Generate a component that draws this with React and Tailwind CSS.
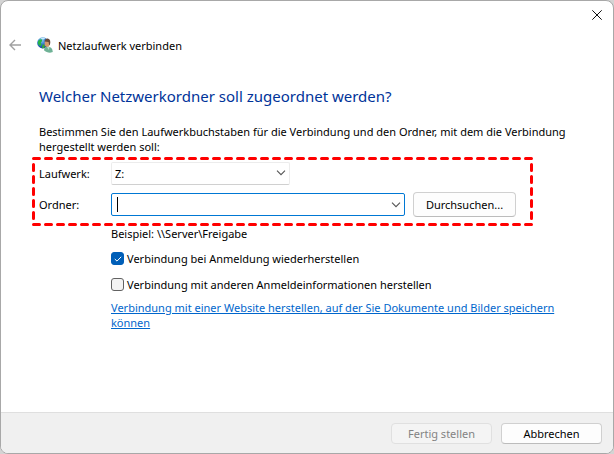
import React from "react";

const drives = ["Z:", "Y:", "X:", "W:", "V:"];

const Chevron = ({ className = "" }) => (
  <svg
    viewBox="0 0 10 6"
    className={`w-[10px] h-[6px] ${className}`}
    fill="none"
    stroke="#555555"
    strokeWidth="1.1"
    aria-hidden="true"
  >
    <path d="M1 0.7 5 4.7 9 0.7" />
  </svg>
);

// Globe with a small user in front of it
const NetworkDriveIcon = () => (
  <svg viewBox="0 0 16 16" className="w-4 h-4 shrink-0" aria-hidden="true">
    <defs>
      <radialGradient id="globe" cx="0.4" cy="0.25" r="0.8">
        <stop offset="0" stopColor="#8fd0f5" />
        <stop offset="0.5" stopColor="#2b74cf" />
        <stop offset="1" stopColor="#123a94" />
      </radialGradient>
    </defs>
    <circle cx="5.8" cy="5.9" r="5.6" fill="url(#globe)" />
    <path d="M1 4.6C2 2.6 3.2 2 4.8 2.4L5.2 4 3.8 5.4 4.6 7 3.4 9.4C1.4 8.2.4 6.6 1 4.6Z" fill="#25b548" />
    <path d="M5.6 7.2 8 8 7.2 11 5 11.2Z" fill="#39a935" />
    <path d="M3.4 1.4C5 .4 7 .4 8.4 1.2L6.4 2.4Z" fill="#c9ecf8" />
    <path d="M7 13.2C7 10.8 8.4 9.6 10.8 9.6 13.8 9.8 15.6 11.6 15.8 15L13 15.8C10.6 15.4 8.4 14.6 7 13.2Z" fill="#6fb296" />
    <path d="M9.6 9.6 12.6 10 11.8 13Z" fill="#b5dccb" />
    <ellipse cx="10.2" cy="6.4" rx="2.6" ry="3.4" fill="#d39a6c" />
    <path d="M7.6 4.6C7.6 2.2 9.2 1.2 10.8 1.4 13.2 1.8 13.8 4 13 7.4L12.2 8.2 11.6 5Z" fill="#66483a" />
  </svg>
);

const CheckOption = ({ id, label, checked, onChange }) => (
  <div className="flex items-center h-[15px]">
    <span className="relative flex items-center justify-center w-[13px] h-[13px] shrink-0">
      <input
        id={id}
        type="checkbox"
        checked={checked}
        onChange={(e) => onChange(e.target.checked)}
        className="appearance-none w-[13px] h-[13px] shrink-0 rounded-[3px] border border-[#626262] bg-[#f3f3f3] checked:border-[#005fb8] checked:bg-[#005fb8]"
      />
      {checked && (
        <svg
          viewBox="0 0 8 6"
          className="absolute w-2 h-1.5 pointer-events-none"
          fill="none"
          stroke="#ffffff"
          aria-hidden="true"
        >
          <path d="M0.8 3 3 5.1 7.2 0.8" />
        </svg>
      )}
    </span>
    <label htmlFor={id} className="pl-[3px] whitespace-nowrap">
      {label}
    </label>
  </div>
);

const App = () => {
  const [drive, setDrive] = React.useState("Z:");
  const [folder, setFolder] = React.useState("");
  const [reconnect, setReconnect] = React.useState(true);
  const [otherLogin, setOtherLogin] = React.useState(false);

  return (
    <div className="min-h-screen flex bg-[#d4d4d4]">
      <div className="flex-1 flex flex-col rounded-lg border border-[#a8a8a8] bg-white overflow-hidden font-['Noto_Sans','Open_Sans',sans-serif] text-[11px] leading-[15px] text-black">
        <div className="flex justify-end h-7">
          <button type="button" aria-label="Schließen" className="w-8 flex items-center justify-center">
            <svg viewBox="0 0 10 10" className="w-[10px] h-[10px]" stroke="#111111" aria-hidden="true">
              <path d="M0.3 0.3 9.7 9.7M9.7 0.3 0.3 9.7" />
            </svg>
          </button>
        </div>

        <header className="flex items-center h-8 pl-2">
          <button type="button" aria-label="Zurück" className="w-7 h-full flex items-center">
            <svg
              viewBox="0 0 12 12"
              className="w-3 h-3"
              fill="none"
              stroke="#a0a0a0"
              strokeWidth="1.4"
              aria-hidden="true"
            >
              <path d="M12 6H1M6 1 1 6 6 11" />
            </svg>
          </button>
          <NetworkDriveIcon />
          <span className="pl-[5px]">Netzlaufwerk verbinden</span>
        </header>

        <main className="flex-1 px-[30px] pb-4">
          <h1 className="mt-[23px] px-2 text-[15px] leading-6 text-[#003399]">
            Welcher Netzwerkordner soll zugeordnet werden?
          </h1>
          <p className="mt-4 pl-2">
            Bestimmen Sie den Laufwerkbuchstaben für die Verbindung und den Ordner, mit dem die Verbindung
            <br />
            hergestellt werden soll:
          </p>

          {/* Highlighted fields */}
          <div className="relative mt-0.5 max-w-[503px] h-[70px] pt-1.5 px-2">
            <svg className="absolute inset-0 w-full h-full pointer-events-none" aria-hidden="true">
              <rect
                x="2.5"
                y="2.5"
                width="498"
                height="66"
                fill="none"
                stroke="#ff0000"
                strokeWidth="3"
                strokeDasharray="6 6"
                strokeLinecap="round"
              />
            </svg>
            <div className="flex items-center h-[23px]">
              <label htmlFor="drive" className="w-[72px] shrink-0">
                Laufwerk:
              </label>
              <div className="relative w-[179px] h-[23px]">
                <select
                  id="drive"
                  value={drive}
                  onChange={(e) => setDrive(e.target.value)}
                  className="appearance-none w-full h-full pl-[3px] rounded-xs border border-[#ececec] border-b-[#d0d0d0] bg-white"
                >
                  {drives.map((d) => (
                    <option key={d}>{d}</option>
                  ))}
                </select>
                <Chevron className="absolute right-1 top-2 pointer-events-none" />
              </div>
            </div>
            <div className="flex items-center h-[25px] mt-[7px]">
              <label htmlFor="folder" className="w-[72px] shrink-0">
                Ordner:
              </label>
              <div className="flex items-center w-[294px] h-[23px] pl-[5px] pr-[3px] rounded-xs border border-[#0078d4] bg-white">
                <span className="w-px h-[15px] bg-black" />
                <input
                  id="folder"
                  type="text"
                  value={folder}
                  onChange={(e) => setFolder(e.target.value)}
                  className="flex-1 min-w-0 h-full outline-none bg-transparent"
                />
                <button type="button" aria-label="Zuletzt verwendete Ordner">
                  <Chevron />
                </button>
              </div>
              <button
                type="button"
                className="ml-2 w-[103px] h-[25px] rounded border border-[#d0d0d0] border-b-[#bcbcbc] bg-[#fdfdfd]"
              >
                Durchsuchen...
              </button>
            </div>
          </div>

          <div className="pl-20">
            <p>Beispiel: \\Server\Freigabe</p>
            <div className="mt-[10px] flex flex-col gap-[11px]">
              <CheckOption
                id="reconnect"
                label="Verbindung bei Anmeldung wiederherstellen"
                checked={reconnect}
                onChange={setReconnect}
              />
              <CheckOption
                id="other-login"
                label="Verbindung mit anderen Anmeldeinformationen herstellen"
                checked={otherLogin}
                onChange={setOtherLogin}
              />
            </div>
            <a href="#website" className="mt-2 block text-[#0066cc] underline">
              Verbindung mit einer Website herstellen, auf der Sie Dokumente und Bilder speichern
              <br />
              können
            </a>
          </div>
        </main>

        <footer className="flex items-center justify-end gap-[9px] h-[41px] pr-[11px] border-t border-[#dfdfdf] bg-[#f0f0f0]">
          <button
            type="button"
            disabled
            className="w-[101px] h-[21px] rounded border border-[#e0e0e0] bg-[#f4f4f4] text-[#838383]"
          >
            Fertig stellen
          </button>
          <button
            type="button"
            className="w-[101px] h-[21px] rounded border border-[#d0d0d0] border-b-[#bcbcbc] bg-[#fdfdfd]"
          >
            Abbrechen
          </button>
        </footer>
      </div>
    </div>
  );
};

export default App;
